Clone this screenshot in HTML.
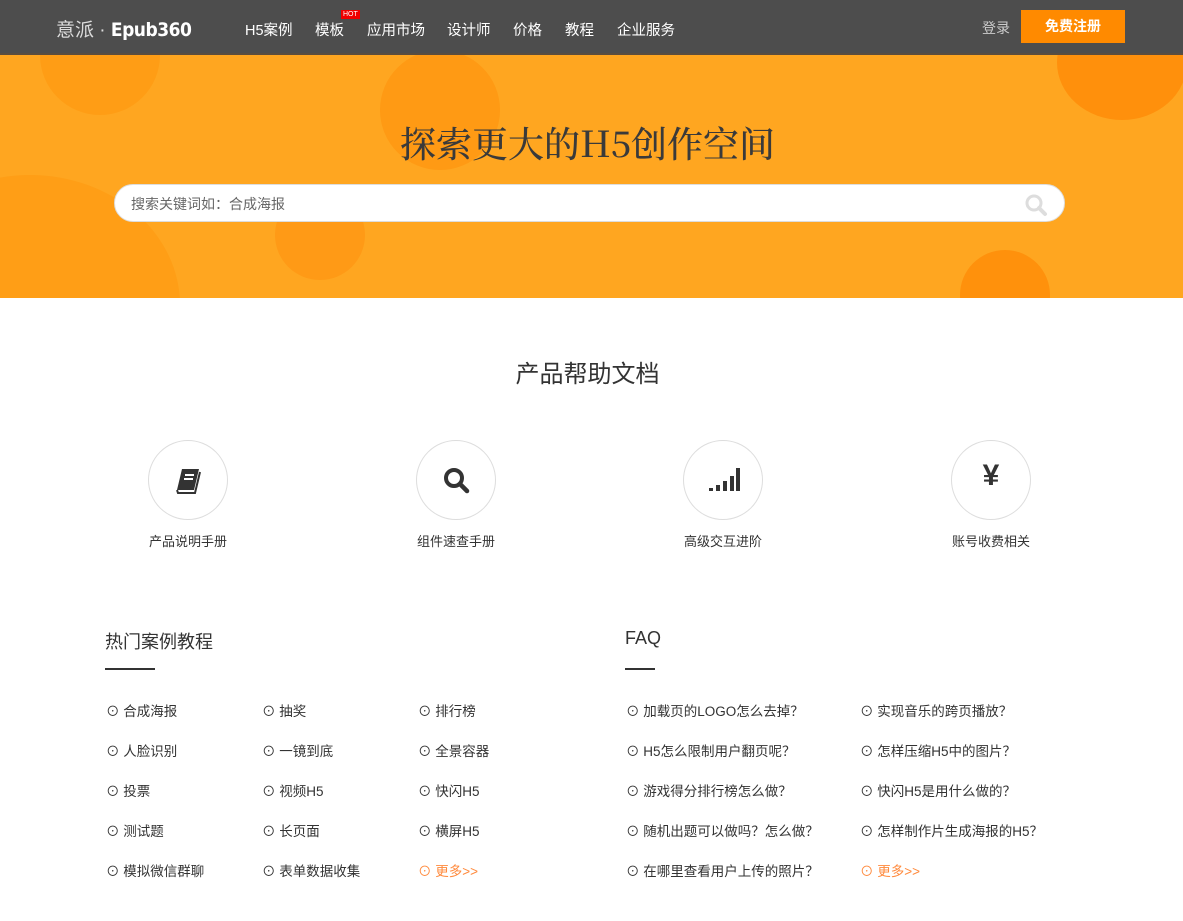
<!DOCTYPE html>
<html><head><meta charset="utf-8"><style>
*{margin:0;padding:0;box-sizing:border-box}
body{width:1183px;height:921px;overflow:hidden;background:#fff;font-family:"Liberation Sans","Noto Sans CJK SC",sans-serif;color:#333;position:relative}
.nav{position:absolute;left:0;top:0;width:1183px;height:55px;background:#4d4d4d;border-bottom:2px solid #5a4d3f}
.nav a{position:absolute;top:19px;color:#fff;font-size:14.5px}
.logo{position:absolute;left:56px;top:15px;color:#ddd;font-size:19px}
.logo b{color:#fff;font-family:"DejaVu Sans Condensed","Liberation Sans",sans-serif;font-weight:bold;font-size:19px;letter-spacing:-0.5px}
.hot{position:absolute;left:341px;top:10px;background:#e00;color:#fff;font-size:7px;padding:0 2px;line-height:9px}
.login{position:absolute;left:982px;top:18px;color:#ccc;font-size:14px}
.reg{position:absolute;left:1021px;top:10px;width:104px;height:33px;background:#ff8a00;color:#fff;font-size:14px;font-weight:bold;text-align:center;line-height:33px}
.hero{position:absolute;left:0;top:55px;width:1183px;height:243px;background:#ffa620;overflow:hidden}
.c{position:absolute;border-radius:50%}
.hero h1{position:absolute;top:62px;width:100%;text-align:center;font-family:"Noto Serif CJK SC",serif;font-size:36px;font-weight:500;color:#3a3a3a;left:-4px}
.search{position:absolute;left:114px;top:129px;width:951px;height:38px;background:#fff;border-radius:19px;border:1px solid #ddd;font-size:14px;color:#666;padding:9px 16px}
h2{position:absolute;top:354px;width:100%;text-align:center;font-size:24px;font-weight:normal;color:#333;left:-4px}
.ic{position:absolute;top:440px;width:80px;height:80px;border:1px solid #ddd;border-radius:50%}
.lb{position:absolute;top:531px;font-size:13px;color:#333;width:160px;text-align:center}
.sec{position:absolute;top:628px;font-size:18px;color:#333}
.bar{position:absolute;top:668px;width:50px;height:2px;background:#333}
.li{position:absolute;font-size:13.5px;color:#333;white-space:nowrap;margin-top:-3px}
.li.o{color:#ff8a3d}
</style></head><body>
<div class="nav">
<div class="logo">意派 · <b>Epub360</b></div>
<a style="left:245px">H5案例</a><a style="left:315px">模板</a><span class="hot">HOT</span>
<a style="left:367px">应用市场</a><a style="left:447px">设计师</a><a style="left:513px">价格</a><a style="left:565px">教程</a><a style="left:617px">企业服务</a>
<span class="login">登录</span><div class="reg">免费注册</div>
</div>
<div class="hero">
<div class="c" style="left:40px;top:-60px;width:120px;height:120px;background:#ff9d15"></div>
<div class="c" style="left:380px;top:-5px;width:120px;height:120px;background:#ff9a14"></div>
<div class="c" style="left:1057px;top:-50px;width:130px;height:115px;background:#ff900c"></div>
<div class="c" style="left:-120px;top:120px;width:300px;height:260px;background:#ff9e16"></div>
<div class="c" style="left:275px;top:135px;width:90px;height:90px;background:#ff9a16"></div>
<div class="c" style="left:960px;top:195px;width:90px;height:90px;background:#ff910c"></div>
<h1>探索更大的H5创作空间</h1>
<div class="search">搜索关键词如：合成海报
<svg style="position:absolute;right:16px;top:8px" width="24" height="24" viewBox="0 0 24 24"><circle cx="10" cy="10" r="7" fill="none" stroke="#ddd" stroke-width="3"/><line x1="15" y1="15" x2="21" y2="21" stroke="#ddd" stroke-width="4" stroke-linecap="round"/></svg></div>
</div>
<h2>产品帮助文档</h2>
<div class="ic" style="left:148px"><svg style="position:absolute;left:24px;top:24px" width="32" height="32" viewBox="0 0 32 32"><path d="M9 4h17l-5 21H4z" fill="#333"/><path d="M4 25l1 3h17l5-21" fill="none" stroke="#333" stroke-width="2"/><rect x="12" y="9" width="9" height="2" fill="#fff"/><rect x="11" y="13" width="9" height="2" fill="#fff"/></svg></div>
<div class="ic" style="left:416px"><svg style="position:absolute;left:24px;top:24px" width="32" height="32" viewBox="0 0 32 32"><circle cx="13" cy="13" r="8" fill="none" stroke="#333" stroke-width="4"/><line x1="19" y1="19" x2="26" y2="26" stroke="#333" stroke-width="4.5" stroke-linecap="round"/></svg></div>
<div class="ic" style="left:683px"><svg style="position:absolute;left:24px;top:24px" width="32" height="32" viewBox="0 0 32 32"><rect x="1" y="23" width="4" height="3" fill="#333"/><rect x="8" y="20" width="4" height="6" fill="#333"/><rect x="15" y="16" width="4" height="10" fill="#333"/><rect x="22" y="11" width="4" height="15" fill="#333"/><rect x="28" y="3" width="4" height="23" fill="#333"/></svg></div>
<div class="ic" style="left:951px"><span style="position:absolute;left:0;width:78px;text-align:center;top:18px;font-size:30px;font-weight:bold;color:#333">¥</span></div>
<div class="lb" style="left:108px">产品说明手册</div><div class="lb" style="left:376px">组件速查手册</div><div class="lb" style="left:643px">高级交互进阶</div><div class="lb" style="left:911px">账号收费相关</div>
<div class="sec" style="left:105px">热门案例教程</div><div class="bar" style="left:105px"></div>
<div class="sec" style="left:625px">FAQ</div><div class="bar" style="left:625px;width:30px"></div>
<div class="li" style="left:106px;top:703px">⊙ 合成海报</div><div class="li" style="left:262px;top:703px">⊙ 抽奖</div><div class="li" style="left:418px;top:703px">⊙ 排行榜</div>
<div class="li" style="left:106px;top:743px">⊙ 人脸识别</div><div class="li" style="left:262px;top:743px">⊙ 一镜到底</div><div class="li" style="left:418px;top:743px">⊙ 全景容器</div>
<div class="li" style="left:106px;top:783px">⊙ 投票</div><div class="li" style="left:262px;top:783px">⊙ 视频H5</div><div class="li" style="left:418px;top:783px">⊙ 快闪H5</div>
<div class="li" style="left:106px;top:823px">⊙ 测试题</div><div class="li" style="left:262px;top:823px">⊙ 长页面</div><div class="li" style="left:418px;top:823px">⊙ 横屏H5</div>
<div class="li" style="left:106px;top:863px">⊙ 模拟微信群聊</div><div class="li" style="left:262px;top:863px">⊙ 表单数据收集</div><div class="li o" style="left:418px;top:863px">⊙ 更多&gt;&gt;</div>
<div class="li" style="left:626px;top:703px">⊙ 加载页的LOGO怎么去掉？</div><div class="li" style="left:860px;top:703px">⊙ 实现音乐的跨页播放？</div>
<div class="li" style="left:626px;top:743px">⊙ H5怎么限制用户翻页呢？</div><div class="li" style="left:860px;top:743px">⊙ 怎样压缩H5中的图片？</div>
<div class="li" style="left:626px;top:783px">⊙ 游戏得分排行榜怎么做？</div><div class="li" style="left:860px;top:783px">⊙ 快闪H5是用什么做的？</div>
<div class="li" style="left:626px;top:823px">⊙ 随机出题可以做吗？怎么做？</div><div class="li" style="left:860px;top:823px">⊙ 怎样制作片生成海报的H5？</div>
<div class="li" style="left:626px;top:863px">⊙ 在哪里查看用户上传的照片？</div><div class="li o" style="left:860px;top:863px">⊙ 更多&gt;&gt;</div>
</body></html>
